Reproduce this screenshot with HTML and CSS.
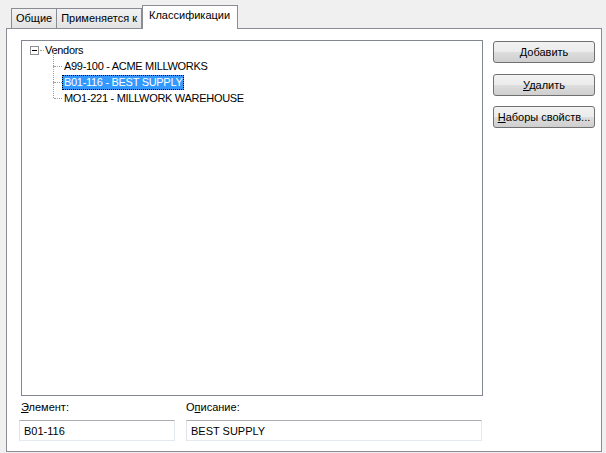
FILE: index.html
```html
<!DOCTYPE html>
<html lang="ru">
<head>
<meta charset="utf-8">
<title>Классификации</title>
<link rel="stylesheet" href="styles.css">
</head>
<body>

<div class="tabs">
  <div class="tab">Общие</div>
  <div class="tab">Применяется к</div>
  <div class="tab active">Классификации</div>
</div>

<div class="panel">
  <div class="top-row">
    <div class="tree">
      <div class="node root">
        <span class="expander"></span><span class="dots short"></span><span class="label">Vendors</span>
      </div>
      <div class="node child">
        <span class="dots"></span><span class="label">A99-100 - ACME MILLWORKS</span>
      </div>
      <div class="node child">
        <span class="dots"></span><span class="label selected">B01-116 - BEST SUPPLY</span>
      </div>
      <div class="node child last">
        <span class="dots"></span><span class="label">MO1-221 - MILLWORK WAREHOUSE</span>
      </div>
    </div>

    <div class="buttons">
      <button><u>Д</u>обавить</button>
      <button><u>У</u>далить</button>
      <button><u>Н</u>аборы свойств...</button>
    </div>
  </div>

  <div class="fields">
    <div class="field item">
      <label><u>Э</u>лемент:</label>
      <div class="input">B01-116</div>
    </div>
    <div class="field desc">
      <label>О<u>п</u>исание:</label>
      <div class="input">BEST SUPPLY</div>
    </div>
  </div>
</div>

</body>
</html>
```

FILE: styles.css
```css
html, body {
  margin: 0;
  padding: 0;
}
body {
  background: #f0f0f0;
  font-family: "Liberation Sans", Arial, sans-serif;
  font-size: 11px;
  color: #000;
  width: 606px;
  height: 453px;
  overflow: hidden;
}

/* tab strip */
.tabs {
  display: flex;
  align-items: flex-end;
  height: 28px;
  padding-left: 11px;
  position: relative;
  z-index: 2;
}
.tab {
  height: 19px;
  line-height: 19px;
  padding: 0 4px 0 4px;
  border: 1px solid #898c95;
  border-bottom: none;
  background: linear-gradient(#f2f2f2, #e3e3e3);
  margin-right: -1px;
  white-space: nowrap;
}
.tab.active {
  height: 23px;
  line-height: 19px;
  padding: 0 7px 0 6px;
  background: #fff;
  margin-bottom: -1px;
  margin-left: 1px;
}

.panel {
  margin-left: 6px;
  width: 596px;
  height: 424px;
  background: #fff;
  border: 1px solid #898c95;
  box-sizing: border-box;
  padding: 11px 0 0 14px;
}

.top-row {
  display: flex;
}

/* tree view */
.tree {
  width: 462px;
  height: 356px;
  box-sizing: border-box;
  border: 1px solid #828790;
  padding: 1px 0 0 8px;
}
.node {
  display: flex;
  align-items: center;
  height: 16px;
  position: relative;
  white-space: nowrap;
}
.expander {
  width: 7px;
  height: 7px;
  border: 1px solid #919191;
  position: relative;
  background: #fff;
}
.expander::after {
  content: "";
  position: absolute;
  left: 1px;
  top: 3px;
  width: 5px;
  height: 1px;
  background: #000;
}
.dots {
  height: 0;
  border-top: 1px dotted #a0a0a0;
}
.dots.short {
  width: 4px;
  margin: 0 1px;
}
.root .label {
  padding-left: 0;
}
.child {
  padding-left: 23px;
}
.child::before {
  content: "";
  position: absolute;
  left: 23px;
  top: -8px;
  height: 16px;
  border-left: 1px dotted #a0a0a0;
}
.child .dots {
  width: 8px;
  margin-left: 1px;
}
.label {
  padding: 1px 2px;
  line-height: 13px;
  letter-spacing: -0.3px;
}
.label.selected {
  background: #3399ff;
  color: #fff;
  outline: 1px dotted #000;
  outline-offset: -1px;
}

/* buttons */
.buttons {
  display: flex;
  flex-direction: column;
  margin-left: 10px;
  margin-top: 1px;
}
.buttons button {
  width: 102px;
  height: 22px;
  margin-bottom: 11px;
  font: inherit;
  color: #000;
  white-space: nowrap;
  border: 1px solid #707070;
  border-radius: 3px;
  background: linear-gradient(#f2f2f2 0%, #ebebeb 50%, #dddddd 51%, #cfcfcf 100%);
  padding: 0;
}
.buttons button:nth-child(2) {
  margin-bottom: 10px;
}

/* fields */
.fields {
  display: flex;
  margin-top: 5px;
}
.field label {
  display: block;
  height: 13px;
  line-height: 13px;
  margin-bottom: 6px;
}
.item {
  margin-left: -2px;
  width: 156px;
}
.item label {
  margin-left: 2px;
}
.desc {
  margin-left: 11px;
  width: 296px;
}
.input {
  height: 21px;
  line-height: 20px;
  box-sizing: border-box;
  border: 1px solid #e3e9ef;
  border-top-color: #abadb3;
  border-left-color: #e2e3ea;
  padding-left: 4px;
}
```
